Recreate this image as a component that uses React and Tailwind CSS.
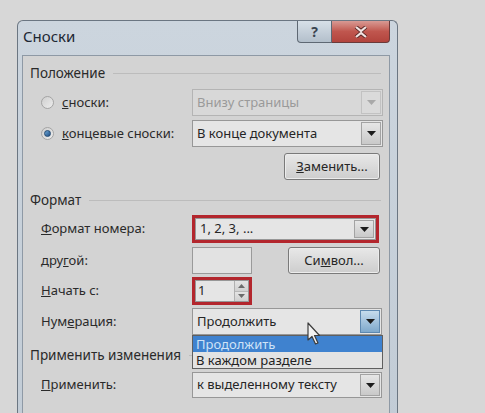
import React from 'react';

const font = { fontFamily: '"Noto Sans", "Open Sans", Arial, sans-serif' };

const Arrow = ({ disabled }) => (
  <svg width="9" height="5" viewBox="0 0 9 5">
    <path d="M0 0 L9 0 L4.5 5 Z" fill={disabled ? '#a9a9a9' : '#1c1c1c'} />
  </svg>
);

const Header = ({ children, mt }) => (
  <div className={`flex items-center h-[20px] ${mt}`}>
    <span className="text-[13.5px] text-[#2a2a2a] whitespace-nowrap">{children}</span>
    <div className="flex-1 h-px bg-[#bcbcbc] ml-[8px] mr-[2px]" />
  </div>
);

const Row = ({ label, mt, h, children }) => (
  <div className={`flex items-center pl-[11px] ${mt} ${h}`}>
    <div className="w-[151px] text-[13px] text-[#2a2a2a] whitespace-nowrap">{label}</div>
    <div className="flex-1 h-full flex items-center relative">{children}</div>
  </div>
);

const Select = ({ text, disabled, active, className = 'w-full h-full' }) => (
  <div
    className={`${className} flex border ${disabled ? 'border-[#b4b4b4] bg-[#d8d8d8]' : 'border-[#979797] bg-[#e5e5e5]'}`}
  >
    <div
      className={`flex-1 flex items-center pl-[4px] text-[13px] whitespace-nowrap ${disabled ? 'text-[#9a9a9a]' : 'text-[#262626]'}`}
    >
      {text}
    </div>
    <div
      className={`w-[20px] my-[1px] mr-[1px] flex items-center justify-center border ${
        active
          ? 'border-[#5d88b0] bg-gradient-to-b from-[#c6dced] to-[#7fa9cc]'
          : disabled
          ? 'border-[#c2c2c2] bg-[#dadada]'
          : 'border-[#a3a3a3] bg-gradient-to-b from-[#e6e6e6] to-[#c9c9c9]'
      }`}
    >
      <Arrow disabled={disabled} />
    </div>
  </div>
);

const Button = ({ children, w }) => (
  <div
    className={`${w} h-full rounded-[3px] border border-[#7a7a7a] bg-gradient-to-b from-[#e8e8e8] to-[#cdcdcd] flex items-center justify-center text-[13px] text-[#262626] shadow-[inset_0_0_0_1px_#ececec]`}
  >
    {children}
  </div>
);

const Radio = ({ checked }) => (
  <div className="w-[13px] h-[13px] rounded-full border border-[#a4a4a4] bg-gradient-to-br from-[#cfcfcf] to-[#ededed] flex items-center justify-center mr-[8px]">
    {checked && <div className="w-[7px] h-[7px] rounded-full bg-gradient-to-br from-[#6fa8d6] to-[#1f4f86] border border-[#234a72]" />}
  </div>
);

export default function App() {
  return (
    <div className="w-[485px] h-[413px] overflow-hidden bg-[#d7d7d7] pt-[20px] pl-[17px]" style={font}>
      <div className="w-[381px] h-[410px] rounded-t-[6px] border border-b-0 border-[#6b7682] bg-gradient-to-b from-[#ccd5de] to-[#c2ccd6] pl-[4px] pr-[7px] flex flex-col">
        <div className="h-[34px] flex items-start justify-between">
          <span className="mt-[4px] pl-[1px] text-[15px] text-[#1d2833]">Сноски</span>
          <div className="flex">
            <div className="w-[35px] h-[22px] rounded-bl-[4px] border border-t-0 border-[#5e6873] bg-gradient-to-b from-[#d7e0e8] to-[#b3bfcb] flex items-center justify-center text-[14px] font-bold text-[#3a4450] leading-none">
              ?
            </div>
            <div className="w-[58px] h-[22px] rounded-br-[4px] border border-t-0 border-l-0 border-[#6a3a3a] bg-gradient-to-b from-[#d89a94] via-[#c0564e] to-[#b2443d] flex items-center justify-center">
              <svg width="14" height="12" viewBox="0 0 14 12">
                <path d="M2 1 L7 5 L12 1 M2 11 L7 7 L12 11" stroke="#5a2a28" strokeWidth="4" fill="none" />
                <path d="M2 1 L7 5 L12 1 M2 11 L7 7 L12 11" stroke="#f2e4e2" strokeWidth="2.2" fill="none" />
              </svg>
            </div>
          </div>
        </div>
        <div className="flex-1 border border-b-0 border-[#8e99a5] bg-[#d3d3d3] pt-[7px] pl-[7px] pr-[6px]">
          <Header mt="">Положение</Header>
          <div className="flex items-center pl-[11px] mt-[6px] h-[27px]">
            <div className="w-[151px] flex items-center text-[13px] text-[#2a2a2a]">
              <Radio />
              <span><u>с</u>носки:</span>
            </div>
            <Select text="Внизу страницы" disabled className="flex-1 h-full" />
          </div>
          <div className="flex items-center pl-[11px] mt-[4px] h-[27px]">
            <div className="w-[151px] flex items-center text-[13px] text-[#2a2a2a] whitespace-nowrap">
              <Radio checked />
              <span><u>к</u>онцевые сноски:</span>
            </div>
            <Select text="В конце документа" className="flex-1 h-full" />
          </div>
          <div className="flex justify-end mt-[6px] h-[27px] pr-[3px]">
            <Button w="w-[96px]"><span><u>З</u>аменить...</span></Button>
          </div>

          <Header mt="mt-[10px]">Формат</Header>
          <Row label={<span><u>Ф</u>ормат номера:</span>} mt="mt-[5px]" h="h-[28px]">
            <div className="w-[187px] h-full border-[3px] border-[#b3262d] flex">
              <Select text="1, 2, 3, ..." className="flex-1 h-full" />
            </div>
          </Row>
          <Row label={<span>дру<u>г</u>ой:</span>} mt="mt-[4px]" h="h-[27px]">
            <div className="w-[60px] h-full border border-[#9a9a9a] bg-[#e2e2e2]" />
            <div className="flex-1" />
            <div className="h-full mr-[3px]">
              <Button w="w-[92px]"><span>Си<u>м</u>вол...</span></Button>
            </div>
          </Row>
          <Row label={<span><u>Н</u>ачать с:</span>} mt="mt-[3px]" h="h-[28px]">
            <div className="w-[60px] h-full border-[3px] border-[#b3262d] flex">
              <div className="flex-1 flex border border-[#979797] bg-[#e5e5e5]">
                <div className="flex-1 flex items-center pl-[2px] text-[13px] text-[#262626]">1</div>
                <div className="w-[14px] flex flex-col border-l border-[#b0b0b0]">
                  <div className="flex-1 flex items-center justify-center bg-gradient-to-b from-[#e4e4e4] to-[#d0d0d0] border-b border-[#b8b8b8]">
                    <svg width="7" height="4" viewBox="0 0 7 4"><path d="M0 4 L7 4 L3.5 0 Z" fill="#6b6b6b" /></svg>
                  </div>
                  <div className="flex-1 flex items-center justify-center bg-gradient-to-b from-[#e4e4e4] to-[#d0d0d0]">
                    <svg width="7" height="4" viewBox="0 0 7 4"><path d="M0 0 L7 0 L3.5 4 Z" fill="#6b6b6b" /></svg>
                  </div>
                </div>
              </div>
            </div>
          </Row>
          <Row label={<span>Нум<u>е</u>рация:</span>} mt="mt-[3px]" h="h-[27px]">
            <div className="w-[190px] h-full relative">
              <Select text="Продолжить" active />
              <div className="absolute left-0 top-full w-[191px] border border-[#5f5f5f] bg-[#e3e3e3] z-10 text-[13px] leading-[16px]">
                <div className="h-[16px] bg-[#3f82cf] text-[#cfe3f7] pl-[3px]">Продолжить</div>
                <div className="h-[16px] text-[#222] pl-[3px]">В каждом разделе</div>
              </div>
              <svg className="absolute left-[115px] top-[14px] z-20" width="15" height="24" viewBox="0 0 15 24">
                <path d="M1 1 L1 18 L5 14.5 L8.5 22 L11 21 L7.5 13.5 L12.5 13.5 Z" fill="#f2f2f2" stroke="#3c3c3c" strokeWidth="1.2" strokeLinejoin="round" />
              </svg>
            </div>
          </Row>

          <Header mt="mt-[10px]">Применить изменения</Header>
          <Row label={<span><u>П</u>рименить:</span>} mt="mt-[7px]" h="h-[26px]">
            <Select text="к выделенному тексту" className="w-[190px] h-full" />
          </Row>
        </div>
      </div>
    </div>
  );
}
